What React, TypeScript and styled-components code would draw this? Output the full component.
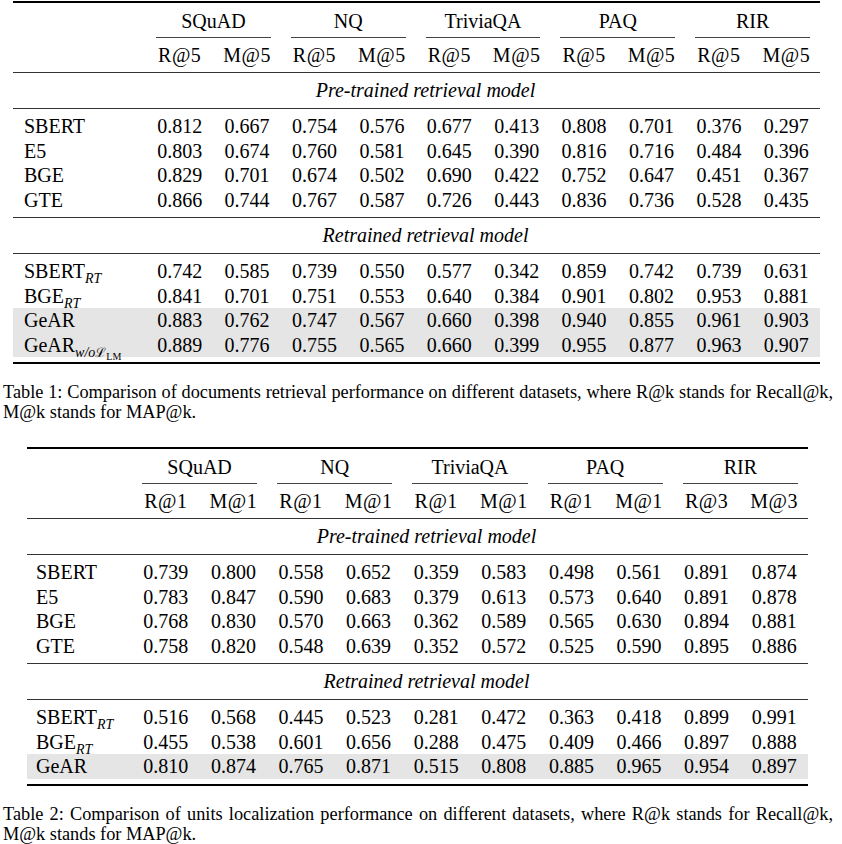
import React from "react";
import styled, { createGlobalStyle } from "styled-components";

const Global = createGlobalStyle`
  html, body { margin: 0; padding: 0; background: #ffffff; }
  body {
    font-family: "Liberation Serif", "Times New Roman", serif;
    color: #000;
    font-size: 20px;
  }
`;

const Page = styled.div`
  width: 842px;
  padding-top: 1px;
  display: flex;
  flex-direction: column;
`;

const Table = styled.div<{ $left: number; $width: number; $top: number }>`
  margin-left: ${(p) => p.$left}px;
  margin-top: ${(p) => p.$top}px;
  width: ${(p) => p.$width}px;
  border-top: 2px solid #000;
  border-bottom: 2px solid #000;
  display: flex;
  flex-direction: column;
`;

const Row = styled.div<{ $label: number }>`
  display: grid;
  grid-template-columns: ${(p) => p.$label}px repeat(10, 1fr);
`;

const GroupRow = styled(Row)`
  line-height: 20px;
`;

const GroupHead = styled.div`
  grid-column: span 2;
  padding: 0 10px;
  text-align: center;
`;

const GroupInner = styled.div`
  padding: 7.5px 0 6.5px;
  border-bottom: 1px solid #444;
`;

const SubHeadRow = styled(Row)`
  line-height: 20px;
  padding: 6.5px 0 7.5px;
  border-bottom: 1px solid #333;
`;

const SubHead = styled.div`
  text-align: center;
  letter-spacing: 0.5px;
`;

const SectionRow = styled.div<{ $shift: number }>`
  line-height: 20px;
  padding: 7px 0 8px ${(p) => p.$shift}px;
  text-align: center;
  font-style: italic;
  border-bottom: 1px solid #333;
`;

const Body = styled.div<{ $last?: boolean }>`
  padding: 5px 0;
  border-bottom: ${(p) => (p.$last ? "none" : "1px solid #333")};
  display: flex;
  flex-direction: column;
`;

const DataRow = styled(Row)<{ $hl?: boolean }>`
  line-height: 24.5px;
  height: 24.5px;
  background: ${(p) => (p.$hl ? "#e5e5e5" : "transparent")};
`;

const Label = styled.div<{ $pad: number }>`
  padding-left: ${(p) => p.$pad}px;
  white-space: nowrap;
`;

const Cell = styled.div`
  text-align: center;
`;

const Sub = styled.span`
  font-size: 14px;
  font-style: italic;
  position: relative;
  top: 5px;
  line-height: 0;
`;

const Script = styled.span`
  font-family: "DejaVu Serif", serif;
  font-style: normal;
  font-size: 13px;
`;

const SubSub = styled.span`
  font-style: normal;
  font-size: 10px;
  position: relative;
  top: 3px;
`;

const Caption = styled.p<{ $top: number }>`
  margin: ${(p) => p.$top}px 0 0 3px;
  width: 830px;
  font-size: 18.3px;
  line-height: 20px;
  text-align: justify;
  text-align-last: left;
`;

type Name = React.ReactNode;
type DRow = { name: Name; vals: string[]; hl?: boolean };

const SBERT_RT = (
  <>
    SBERT<Sub>RT</Sub>
  </>
);
const BGE_RT = (
  <>
    BGE<Sub>RT</Sub>
  </>
);
const GEAR_WO = (
  <>
    GeAR
    <Sub>
      w/o<Script>ℒ</Script>
      <SubSub>LM</SubSub>
    </Sub>
  </>
);

const groups = ["SQuAD", "NQ", "TriviaQA", "PAQ", "RIR"];

interface TableSpec {
  left: number;
  width: number;
  top: number;
  label: number;
  pad: number;
  subs: string[];
  pre: DRow[];
  re: DRow[];
}

const t1: TableSpec = {
  left: 13,
  width: 807,
  top: 0,
  label: 133,
  pad: 11,
  subs: ["R@5", "M@5", "R@5", "M@5", "R@5", "M@5", "R@5", "M@5", "R@5", "M@5"],
  pre: [
    { name: "SBERT", vals: "0.812 0.667 0.754 0.576 0.677 0.413 0.808 0.701 0.376 0.297".split(" ") },
    { name: "E5", vals: "0.803 0.674 0.760 0.581 0.645 0.390 0.816 0.716 0.484 0.396".split(" ") },
    { name: "BGE", vals: "0.829 0.701 0.674 0.502 0.690 0.422 0.752 0.647 0.451 0.367".split(" ") },
    { name: "GTE", vals: "0.866 0.744 0.767 0.587 0.726 0.443 0.836 0.736 0.528 0.435".split(" ") },
  ],
  re: [
    { name: SBERT_RT, vals: "0.742 0.585 0.739 0.550 0.577 0.342 0.859 0.742 0.739 0.631".split(" ") },
    { name: BGE_RT, vals: "0.841 0.701 0.751 0.553 0.640 0.384 0.901 0.802 0.953 0.881".split(" ") },
    { name: "GeAR", hl: true, vals: "0.883 0.762 0.747 0.567 0.660 0.398 0.940 0.855 0.961 0.903".split(" ") },
    { name: GEAR_WO, hl: true, vals: "0.889 0.776 0.755 0.565 0.660 0.399 0.955 0.877 0.963 0.907".split(" ") },
  ],
};

const t2: TableSpec = {
  left: 27,
  width: 781,
  top: 25,
  label: 105,
  pad: 9,
  subs: ["R@1", "M@1", "R@1", "M@1", "R@1", "M@1", "R@1", "M@1", "R@3", "M@3"],
  pre: [
    { name: "SBERT", vals: "0.739 0.800 0.558 0.652 0.359 0.583 0.498 0.561 0.891 0.874".split(" ") },
    { name: "E5", vals: "0.783 0.847 0.590 0.683 0.379 0.613 0.573 0.640 0.891 0.878".split(" ") },
    { name: "BGE", vals: "0.768 0.830 0.570 0.663 0.362 0.589 0.565 0.630 0.894 0.881".split(" ") },
    { name: "GTE", vals: "0.758 0.820 0.548 0.639 0.352 0.572 0.525 0.590 0.895 0.886".split(" ") },
  ],
  re: [
    { name: SBERT_RT, vals: "0.516 0.568 0.445 0.523 0.281 0.472 0.363 0.418 0.899 0.991".split(" ") },
    { name: BGE_RT, vals: "0.455 0.538 0.601 0.656 0.288 0.475 0.409 0.466 0.897 0.888".split(" ") },
    { name: "GeAR", hl: true, vals: "0.810 0.874 0.765 0.871 0.515 0.808 0.885 0.965 0.954 0.897".split(" ") },
  ],
};

function ResultsTable({ spec }: { spec: TableSpec }) {
  const shift = 18;
  const renderRows = (rows: DRow[]) =>
    rows.map((r, i) => (
      <DataRow key={i} $label={spec.label} $hl={r.hl}>
        <Label $pad={spec.pad}>{r.name}</Label>
        {r.vals.map((v, j) => (
          <Cell key={j}>{v}</Cell>
        ))}
      </DataRow>
    ));
  return (
    <Table $left={spec.left} $width={spec.width} $top={spec.top}>
      <GroupRow $label={spec.label}>
        <div />
        {groups.map((g) => (
          <GroupHead key={g}>
            <GroupInner>{g}</GroupInner>
          </GroupHead>
        ))}
      </GroupRow>
      <SubHeadRow $label={spec.label}>
        <div />
        {spec.subs.map((s, i) => (
          <SubHead key={i}>{s}</SubHead>
        ))}
      </SubHeadRow>
      <SectionRow $shift={shift}>Pre-trained retrieval model</SectionRow>
      <Body>{renderRows(spec.pre)}</Body>
      <SectionRow $shift={shift}>Retrained retrieval model</SectionRow>
      <Body $last>{renderRows(spec.re)}</Body>
    </Table>
  );
}

export default function App() {
  return (
    <Page>
      <Global />
      <ResultsTable spec={t1} />
      <Caption $top={18}>
        Table 1: Comparison of documents retrieval performance on different datasets, where R@k stands for Recall@k,
        M@k stands for MAP@k.
      </Caption>
      <ResultsTable spec={t2} />
      <Caption $top={18}>
        Table 2: Comparison of units localization performance on different datasets, where R@k stands for Recall@k,
        M@k stands for MAP@k.
      </Caption>
    </Page>
  );
}
